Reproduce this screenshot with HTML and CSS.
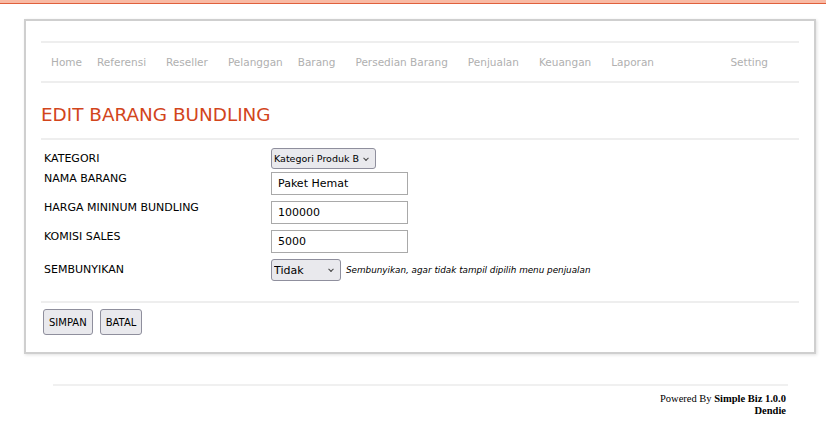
FILE: index.html
```html
<!DOCTYPE html>
<html lang="id">
<head>
<meta charset="utf-8">
<title>Edit Barang Bundling</title>
<link rel="stylesheet" href="styles.css">
</head>
<body>
<div class="topbar"></div>
<div class="panel">
  <nav class="menu">
    <a class="mi mi-home">Home</a>
    <a class="mi">Referensi</a>
    <a class="mi">Reseller</a>
    <a class="mi mi-tight">Pelanggan</a>
    <a class="mi">Barang</a>
    <a class="mi">Persedian Barang</a>
    <a class="mi">Penjualan</a>
    <a class="mi">Keuangan</a>
    <a class="mi">Laporan</a>
    <a class="mi mi-setting">Setting</a>
  </nav>
  <h1 class="title">EDIT BARANG BUNDLING</h1>
  <form class="form">
    <div class="row row-sel">
      <label class="lbl">KATEGORI</label>
      <span class="selwrap sel-kat"><select class="sel"><option>Kategori Produk B</option></select></span>
    </div>
    <div class="row">
      <label class="lbl">NAMA BARANG</label>
      <input class="inp" type="text" value="Paket Hemat">
    </div>
    <div class="row">
      <label class="lbl">HARGA MININUM BUNDLING</label>
      <input class="inp" type="text" value="100000">
    </div>
    <div class="row">
      <label class="lbl">KOMISI SALES</label>
      <input class="inp" type="text" value="5000">
    </div>
    <div class="row row-sel row-last">
      <label class="lbl">SEMBUNYIKAN</label>
      <span class="selwrap sel-hide"><select class="sel"><option>Tidak</option></select></span>
      <em class="hint">Sembunyikan, agar tidak tampil dipilih menu penjualan</em>
    </div>
    <div class="actions">
      <button type="button" class="btn">SIMPAN</button>
      <button type="button" class="btn">BATAL</button>
    </div>
  </form>
</div>
<footer class="footer">
  <div>Powered By <b>Simple Biz 1.0.0</b></div>
  <div><b>Dendie</b></div>
</footer>
</body>
</html>
```

FILE: styles.css
```css
* { box-sizing: border-box; }
html, body { margin: 0; padding: 0; background: #fff; }
body { font-family: "DejaVu Sans", Verdana, sans-serif; font-size: 11px; color: #000; }

.topbar { height: 4px; background: #f9baa4; border-bottom: 1px solid #e0603c; }

.panel {
  margin: 15px 10px 0 24px;
  border: 2px solid #cfcfcf;
  box-shadow: 1px 1px 3px rgba(0,0,0,0.12);
  padding: 20px 15px 17px 15px;
}

.menu {
  display: flex;
  align-items: center;
  height: 42px;
  border-top: 2px solid #eeeeee;
  border-bottom: 2px solid #eeeeee;
  padding-left: 10px;
  font-size: 10.5px;
}
.mi { color: #b0b0b0; padding: 0 10px; white-space: nowrap; }
.mi-home { padding-left: 0; padding-right: 5px; }
.mi-tight { padding-right: 5px; }
.mi-setting { margin-left: auto; padding-right: 31px; }

.title {
  margin: 0;
  padding: 21px 0 12px 0;
  font-size: 18.4px;
  font-weight: normal;
  color: #d2451c;
  border-bottom: 2px solid #eeeeee;
  line-height: 22px;
}

.form { padding-top: 8px; }
.row { display: flex; align-items: flex-start; margin-bottom: 3px; }
.row-sel { margin-bottom: 2px; }
.row-last { align-items: center; margin-top: 4px; margin-bottom: 20px; }
.lbl { width: 230px; padding-left: 3px; padding-top: 1px; line-height: 14px; flex: none; }
.row-sel .lbl { padding-top: 4px; }
.row-last .lbl { padding-top: 0; }

.inp {
  width: 137px; height: 23px;
  border: 1px solid #a9a9a9;
  padding: 0 6px;
  font-family: inherit; font-size: 11px; color: #000;
  outline: none; margin: 1px 0 2px 0;
}

.selwrap { position: relative; display: inline-block; }
.sel {
  -webkit-appearance: none; appearance: none;
  background: #e9e9ed;
  border: 1px solid #8f8f9d;
  border-radius: 3px;
  font-family: inherit; color: #000;
  outline: none;
}
.sel-kat .sel { width: 105px; height: 21px; font-size: 9.5px; padding: 0 12px 0 2px; }
.sel-hide .sel { width: 70px; height: 22px; font-size: 11px; padding: 0 14px 0 2px; }
.selwrap::after {
  content: "";
  position: absolute;
  right: 8px; top: 50%;
  width: 3px; height: 3px;
  border-right: 1px solid #444;
  border-bottom: 1px solid #444;
  transform: translateY(-70%) rotate(45deg);
  pointer-events: none;
}
.hint { font-size: 8.8px; margin-left: 5px; font-style: italic; }

.actions {
  border-top: 2px solid #eeeeee;
  padding: 6px 0 0 2px;
  display: flex; gap: 7px;
}
.btn {
  height: 26px;
  background: #e9e9ed;
  border: 1px solid #8f8f9d;
  border-radius: 3px;
  font-family: inherit; font-size: 10px; color: #000;
  padding: 0 5px;
}

.footer {
  margin: 30px 38px 0 53px;
  border-top: 2px solid #f0f0f0;
  padding: 7px 2px 0 0;
  text-align: right;
  font-family: "Liberation Serif", "Times New Roman", serif;
  font-size: 10.5px;
  line-height: 12px;
}
```
